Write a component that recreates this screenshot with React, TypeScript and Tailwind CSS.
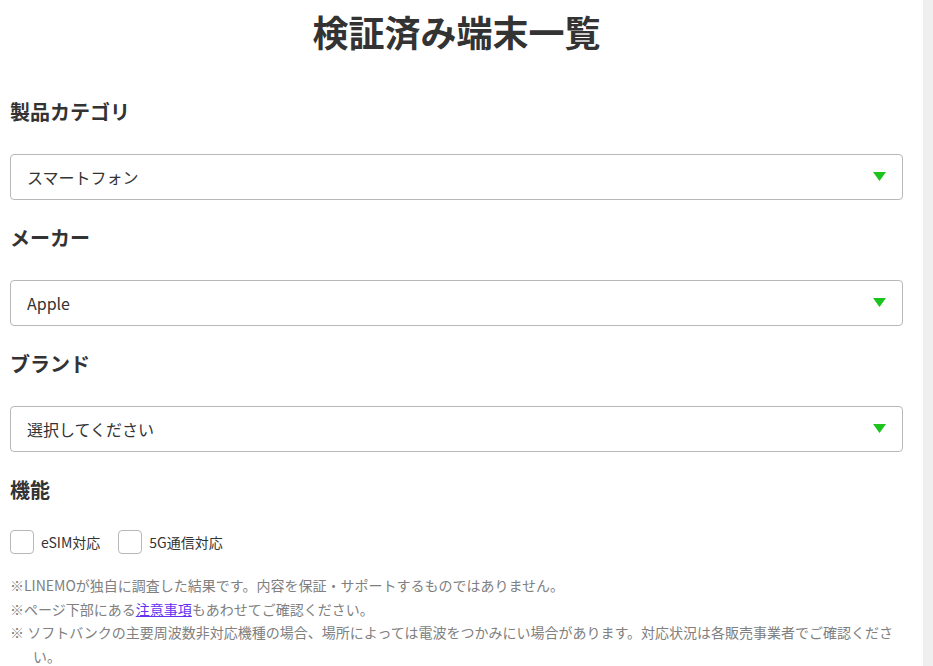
import React from "react";

const font = { fontFamily: '"Noto Sans CJK JP", "Noto Sans", sans-serif' };

function Select({ value }: { value: string }) {
  return (
    <div className="relative mt-[27px] flex h-[46px] items-center rounded-[4px] border border-[#b8b8b8] bg-white pl-[16px] text-[16px] text-[#333]">
      <span className="leading-[24px]">{value}</span>
      <svg className="absolute right-[16px] top-[17px]" width="13" height="9" viewBox="0 0 13 9">
        <polygon points="0,0 13,0 6.5,9" fill="#1ec31e" />
      </svg>
    </div>
  );
}

function Heading({ children, first }: { children: React.ReactNode; first?: boolean }) {
  return (
    <h2 className={`${first ? "mt-[43px]" : "mt-[23px]"} text-[20px] font-bold leading-[30px] text-[#333]`}>
      {children}
    </h2>
  );
}

function Check({ label }: { label: string }) {
  return (
    <label className="flex items-center gap-[7px]">
      <span className="block h-[24px] w-[24px] rounded-[4px] border border-[#b8b8b8] bg-white" />
      <span className="text-[14px] leading-[20px] text-[#333]">{label}</span>
    </label>
  );
}

export default function App() {
  return (
    <div className="flex h-[666px] w-[933px] overflow-hidden bg-white" style={font}>
      <div className="w-[923px] px-[10px]">
        <div className="w-[893px]">
          <h1 className="pt-[8px] text-center text-[36px] font-bold leading-[46px] text-[#333]">
            検証済み端末一覧
          </h1>
          <Heading first>製品カテゴリ</Heading>
          <Select value="スマートフォン" />
          <Heading>メーカー</Heading>
          <Select value="Apple" />
          <Heading>ブランド</Heading>
          <Select value="選択してください" />
          <Heading>機能</Heading>
          <div className="mt-[25px] flex gap-[18px]">
            <Check label="eSIM対応" />
            <Check label="5G通信対応" />
          </div>
          <div className="mt-[20px] text-[14px] leading-[23.5px] text-[#808080]">
            <p>※LINEMOが独自に調査した結果です。内容を保証・サポートするものではありません。</p>
            <p>
              ※ページ下部にある
              <a href="#" className="text-[#6230f0] underline">
                注意事項
              </a>
              もあわせてご確認ください。
            </p>
            <p className="pl-[23px] pr-[4px] -indent-[23px]">
              ※ ソフトバンクの主要周波数非対応機種の場合、場所によっては電波をつかみにい場合があります。対応状況は各販売事業者でご確認ください。
            </p>
          </div>
        </div>
      </div>
      <div className="h-full w-[10px] bg-[#efefef]" />
    </div>
  );
}
